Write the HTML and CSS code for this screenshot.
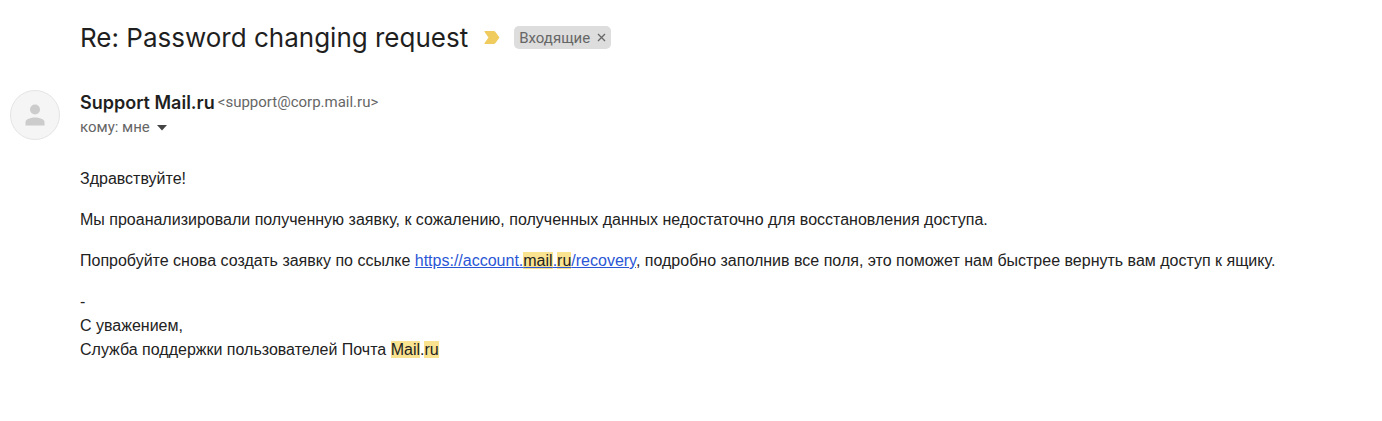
FILE: index.html
```html
<!DOCTYPE html>
<html lang="ru">
  <head>
    <meta charset="UTF-8" />
    <meta name="viewport" content="width=device-width, initial-scale=1.0" />
    <title>Re: Password changing request</title>
    <link rel="stylesheet" href="styles.css">
  </head>
  <body>
    <main class="mail">
      <header class="subject-row">
        <h1 class="subject">Re: Password changing request</h1>
        <button class="important" type="button" aria-label="Важное">
          <svg width="16" height="13" viewBox="0 0 16 13">
            <path d="M1 0h8.500q1.300 0 2 1l4 5.500-4 5.500q-.7 1-2 1H1q-1 0-.4-1l3.900-5.500L.6 1Q0 0 1 0z" fill="#f0cb5e" />
          </svg>
        </button>
        <div class="label">
          <span>Входящие</span>
          <button class="label-remove" type="button" aria-label="Удалить ярлык">
            <svg width="9" height="9" viewBox="0 0 9 9">
              <path d="M1 1l7 7M8 1L1 8" stroke="#666" stroke-width="1.300" />
            </svg>
          </button>
        </div>
      </header>

      <article class="message">
        <div class="avatar">
          <svg width="20" height="22" viewBox="0 0 20 22">
            <circle cx="10" cy="5.500" r="5" fill="#ccc" />
            <path d="M.5 21.500v-3.500C.5 15 6 13.500 10 13.500s9.500 1.500 9.500 4.500v3.500z" fill="#ccc" />
          </svg>
        </div>
        <div class="content">
          <div class="sender">
            <strong class="name">Support Mail.ru</strong>
            <span class="address">&lt;support@corp.mail.ru&gt;</span>
          </div>
          <div class="recipient">
            <span>кому: мне</span>
            <button class="details" type="button" aria-label="Показать детали">
              <svg width="10" height="6" viewBox="0 0 10 6">
                <path d="M0 0h10L5 5.500z" fill="#444" />
              </svg>
            </button>
          </div>

          <div class="body">
            <p>Здравствуйте!</p>
            <p>Мы проанализировали полученную заявку, к сожалению, полученных данных недостаточно для восстановления доступа.</p>
            <p>Попробуйте снова создать заявку по ссылке <a href="https://account.mail.ru/recovery">https://account.<mark>mail</mark>.<mark>ru</mark>/recovery</a>, подробно заполнив все поля, это поможет нам быстрее вернуть вам доступ к ящику.</p>
            <p>-<br />С уважением,<br />Служба поддержки пользователей Почта <mark>Mail</mark>.<mark>ru</mark></p>
          </div>
        </div>
      </article>
    </main>
  </body>
</html>
```
FILE: styles.css
```css
* {
  margin: 0;
  padding: 0;
  box-sizing: border-box;
}
body {
  font-family: "Liberation Sans", Arial, sans-serif;
  font-size: 16px;
  line-height: 24px;
  background: #fff;
  color: #222;
}
button {
  display: flex;
  border: none;
  background: none;
  cursor: pointer;
}
svg {
  display: block;
}
.mail {
  padding: 20px 10px;
}
.subject-row {
  display: flex;
  align-items: center;
  padding-left: 70px;
}
.subject {
  font-family: "Google Sans", Inter, sans-serif;
  font-size: 26px;
  font-weight: 400;
  line-height: 35px;
  color: #1f1f1f;
}
.important {
  margin: 0 14px 0 16px;
}
.label {
  display: flex;
  align-items: center;
  gap: 7px;
  height: 23px;
  padding: 0 5px;
  border-radius: 5px;
  background: #ddd;
  font-family: "Google Sans", Roboto, sans-serif;
  font-size: 15px;
  color: #666;
}
.message {
  display: flex;
  gap: 20px;
  margin-top: 35px;
}
.avatar {
  display: flex;
  flex: none;
  align-items: center;
  justify-content: center;
  width: 50px;
  height: 50px;
  border: 1px solid #e4e4e4;
  border-radius: 50%;
  background: #f5f5f5;
}
.content {
  flex: 1;
}
.sender,
.recipient {
  display: flex;
  align-items: center;
  font-family: "Google Sans", Roboto, sans-serif;
  font-size: 15px;
  line-height: 25px;
  color: #666;
}
.sender {
  gap: 3px;
}
.recipient {
  gap: 7px;
}
.name {
  font-family: "Google Sans", Inter, sans-serif;
  font-size: 18px;
  font-weight: 600;
  color: #1f1f1f;
}
.body {
  margin-top: 27px;
}
.body p + p {
  margin-top: 17px;
}
.body a {
  color: #2a56d6;
}
mark {
  background: #f9e391;
  color: #222;
}
```
